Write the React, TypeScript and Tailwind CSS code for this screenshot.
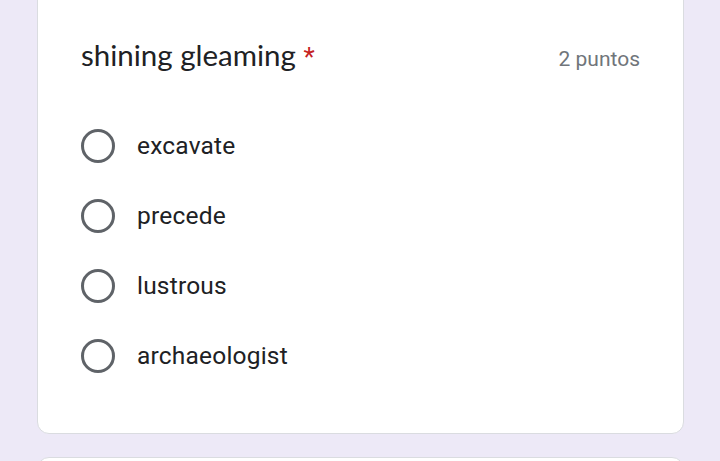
const options = ["excavate", "precede", "lustrous", "archaeologist"];

export default function App() {
  return (
    <div className="h-[461px] w-[720px] overflow-hidden bg-[#ede9f7]">
      <div className="-mt-6 ml-[37px] w-[647px] rounded-xl border border-[#dadce0] bg-white pl-[43px] pr-[43px] pt-[58px] pb-[42px]">
        <div className="flex items-baseline justify-between">
          <h2
            className="text-[29.5px] leading-[40px] text-[#202124]"
            style={{ fontFamily: 'Lato, "Noto Sans", sans-serif' }}
          >
            shining gleaming{" "}
            <span
              className="text-[26px] text-[#c5221f]"
              style={{ fontFamily: 'Roboto, "Noto Sans", sans-serif' }}
            >
              *
            </span>
          </h2>
          <span
            className="text-[21px] text-[#70757a]"
            style={{ fontFamily: 'Roboto, "Noto Sans", sans-serif' }}
          >
            2 puntos
          </span>
        </div>
        <div className="mt-[34px] flex flex-col">
          {options.map((o) => (
            <label key={o} className="flex h-[70px] items-center gap-[22px]">
              <span className="h-[34px] w-[34px] shrink-0 rounded-full border-[3px] border-[#5f6368]" />
              <span
                className="text-[24.5px] tracking-[0.2px] text-[#202124]"
                style={{ fontFamily: 'Roboto, "Noto Sans", sans-serif' }}
              >
                {o}
              </span>
            </label>
          ))}
        </div>
      </div>
      <div className="mt-[23px] ml-[37px] h-[40px] w-[647px] rounded-xl border border-[#dadce0] bg-white" />
    </div>
  );
}
